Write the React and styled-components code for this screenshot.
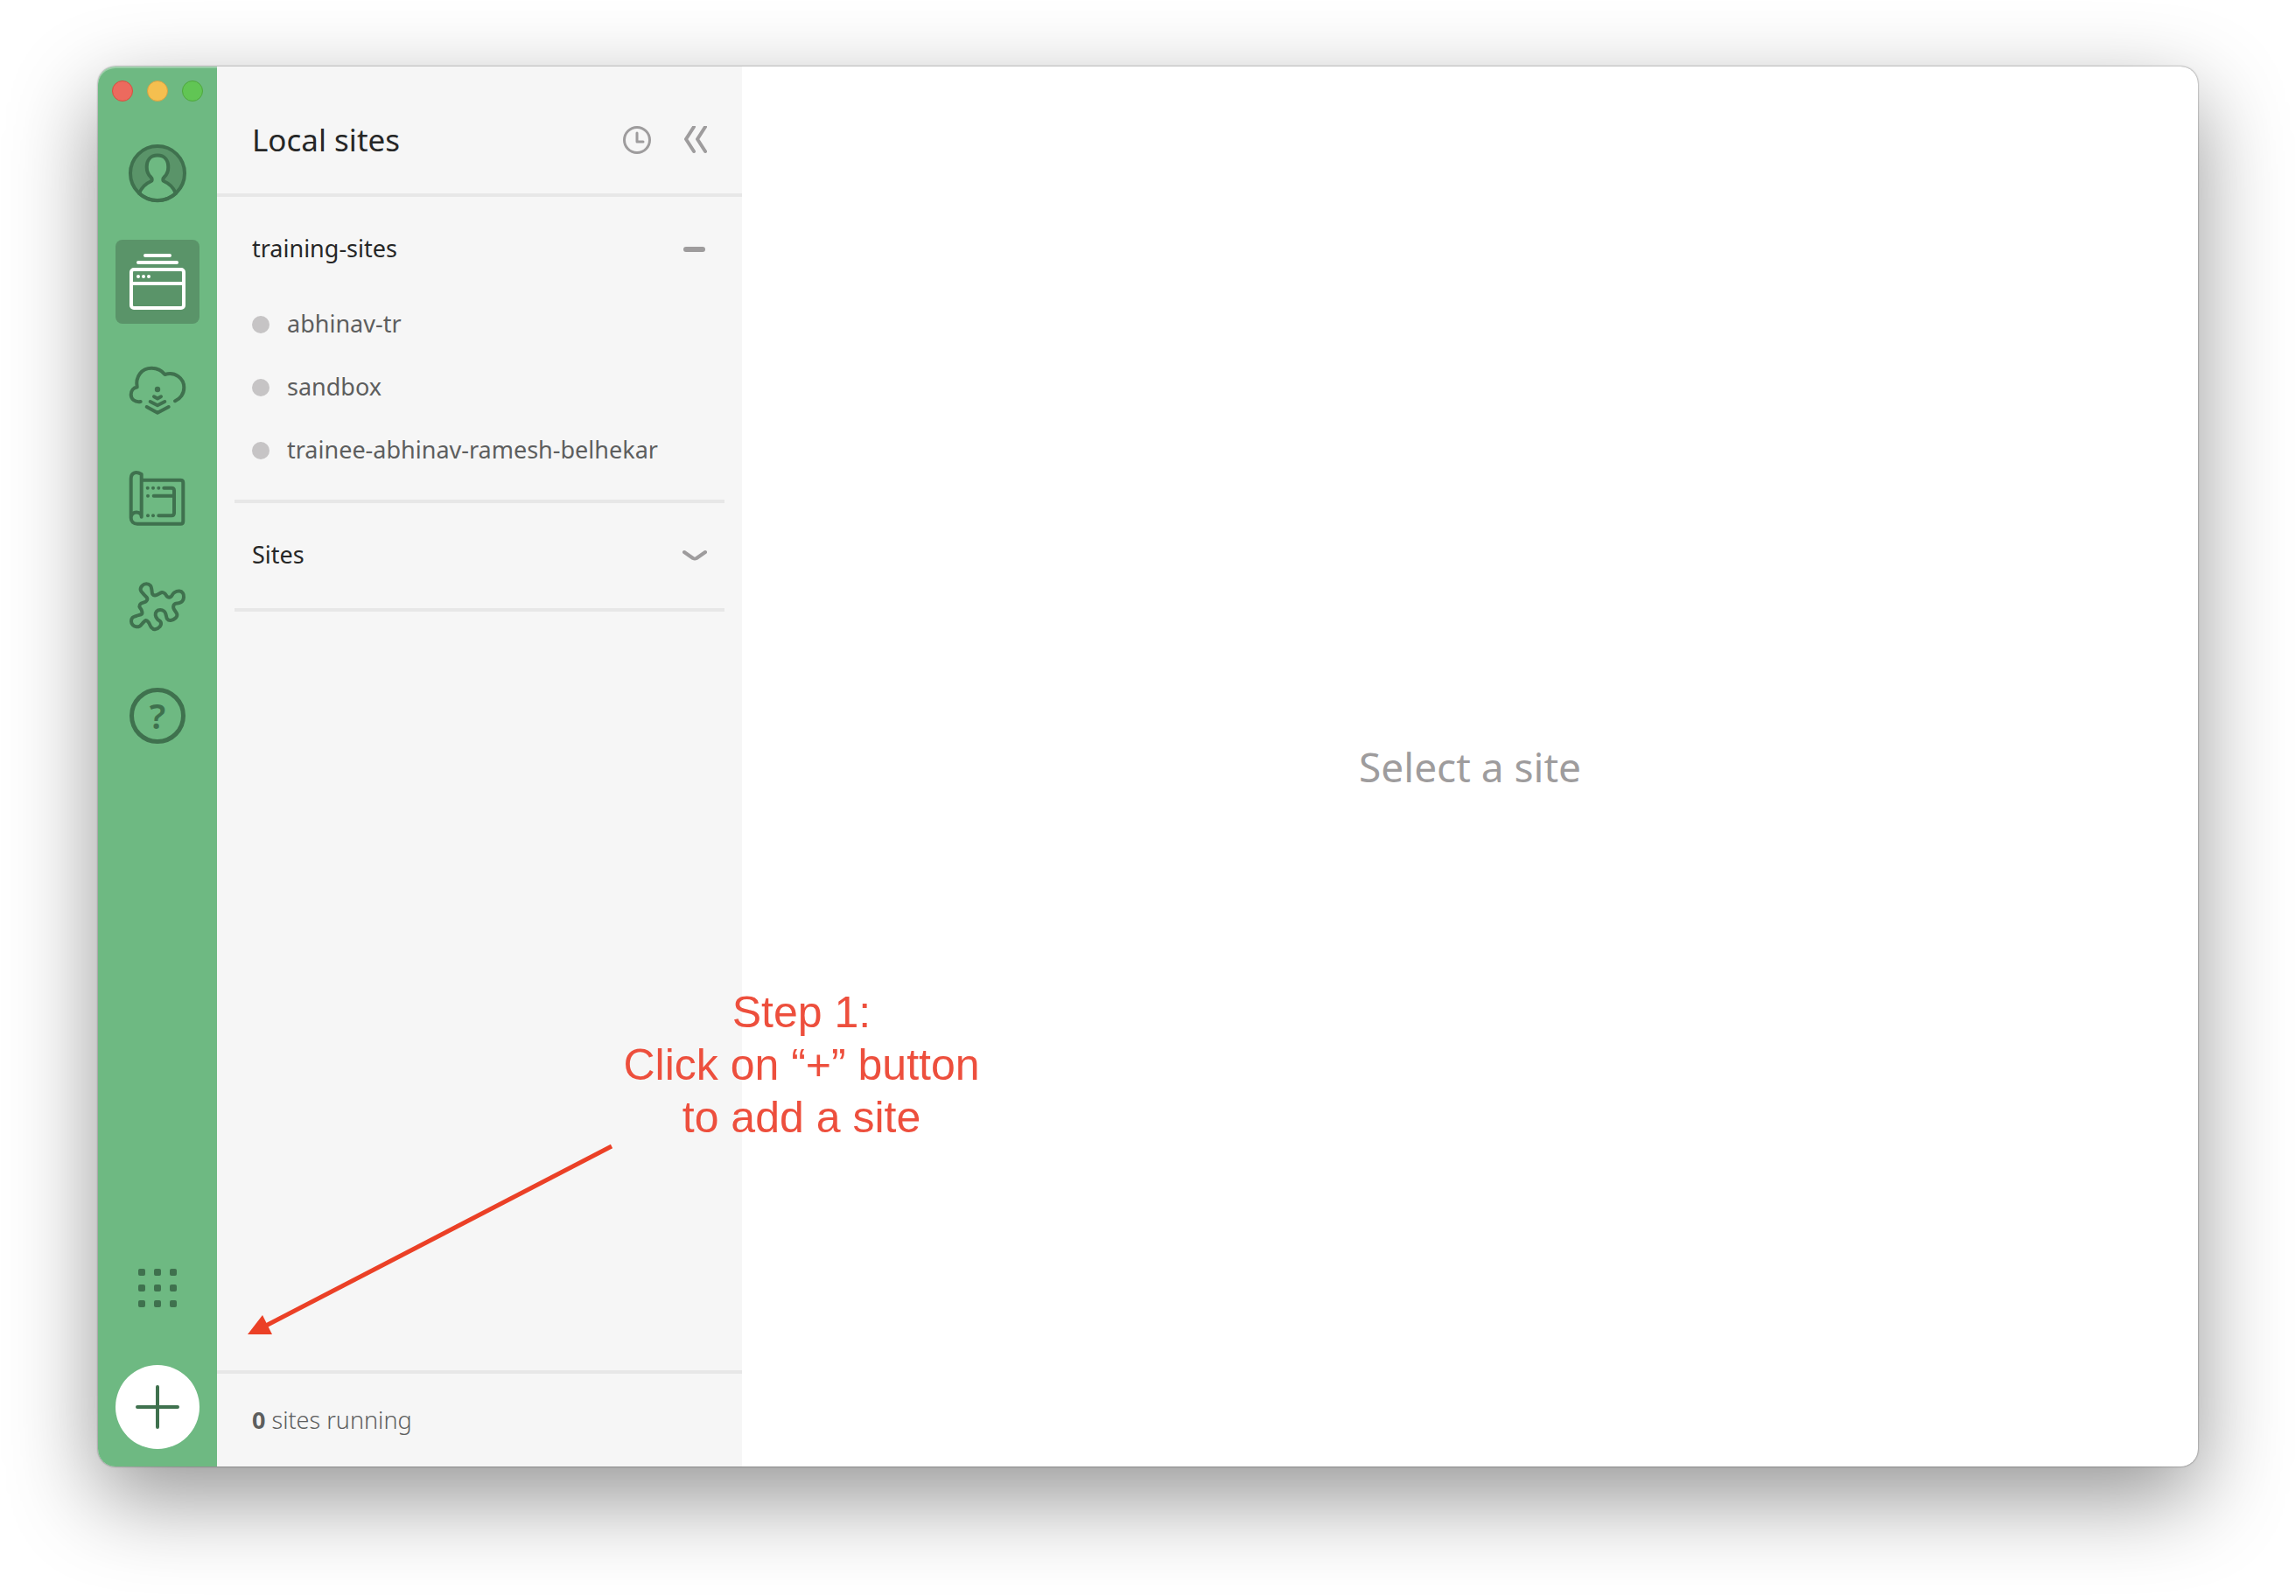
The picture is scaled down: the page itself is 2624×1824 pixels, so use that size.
import React, { useState } from "react";
import styled, { createGlobalStyle } from "styled-components";

const color = {
  rail: "#6eb982",
  railActive: "#5a9469",
  railInk: "#3f714e",
  panel: "#f6f6f6",
  line: "#e7e7e7",
  heading: "#262727",
  body: "#5d5e5e",
  muted: "#9e9c9d",
  dot: "#c6c4c5",
  note: "#ed4f3d",
  arrow: "#eb4026",
};

const GlobalStyle = createGlobalStyle`
  *, *::before, *::after { box-sizing: border-box; }
  body {
    margin: 0;
    background: #fff;
    font-family: "Noto Sans", "Open Sans", sans-serif;
    color: ${color.body};
  }
  button { font: inherit; color: inherit; }
`;

const Desktop = styled.div`
  display: flex;
  min-height: 100vh;
  padding: 76px 112px 148px;
  overflow: hidden;
`;

const Window = styled.div`
  position: relative;
  display: flex;
  flex: 1;
  border-radius: 20px;
  background: #fff;
  box-shadow: 0 0 2px rgba(0, 0, 0, 0.6), 0 36px 100px rgba(0, 0, 0, 0.42);
`;

const Rail = styled.nav`
  display: flex;
  flex-direction: column;
  align-items: center;
  width: 136px;
  padding: 16px 20px 20px;
  border-radius: 20px 0 0 20px;
  background: ${color.rail};
  color: ${color.railInk};
  box-shadow: inset 0 2px 0 rgba(255, 255, 255, 0.3);
`;

const TrafficLights = styled.div`
  display: flex;
  gap: 16px;
  margin-bottom: 34px;
`;

const Light = styled.button`
  width: 24px;
  height: 24px;
  padding: 0;
  border: 1px solid ${(p) => p.$edge};
  border-radius: 50%;
  background: ${(p) => p.$fill};
`;

const RailItems = styled.div`
  display: flex;
  flex: 1;
  flex-direction: column;
  gap: 28px;
`;

const RailButton = styled.button`
  display: grid;
  place-items: center;
  width: 96px;
  height: 96px;
  padding: 0;
  border: 0;
  border-radius: 8px;
  background: ${(p) => (p.$active ? color.railActive : "transparent")};
  color: ${(p) => (p.$active ? "#fff" : "inherit")};
`;

const HelpMark = styled.span`
  display: grid;
  place-items: center;
  width: 64px;
  height: 64px;
  border: 5px solid currentColor;
  border-radius: 50%;
  font-size: 40px;
  font-weight: 600;
  line-height: 54px;
`;

const AddButton = styled.button`
  display: grid;
  place-items: center;
  width: 96px;
  height: 96px;
  margin-top: 40px;
  padding: 0;
  border: 0;
  border-radius: 50%;
  background: #fff;
`;

const Sidebar = styled.aside`
  display: flex;
  flex-direction: column;
  width: 600px;
  background: ${color.panel};
`;

const SidebarHeader = styled.header`
  display: flex;
  align-items: center;
  gap: 32px;
  padding: 64px 40px 41px;
  border-bottom: 4px solid ${color.line};
`;

const Title = styled.h1`
  flex: 1;
  margin: 0;
  font-size: 35px;
  font-weight: 400;
  line-height: 40px;
  color: ${color.heading};
`;

const IconButton = styled.button`
  display: flex;
  padding: 0;
  border: 0;
  background: none;
  color: ${color.muted};
`;

const Groups = styled.div`
  flex: 1;
  padding: 0 20px;
`;

const Group = styled.section`
  padding-bottom: ${(p) => (p.$open ? 20 : 0)}px;
  border-bottom: 4px solid ${color.line};
`;

const GroupToggle = styled.button`
  display: flex;
  align-items: center;
  justify-content: space-between;
  width: 100%;
  padding: 40px 20px ${(p) => (p.$open ? 30 : 40)}px;
  border: 0;
  background: none;
  font-size: 27px;
  line-height: 40px;
  color: ${color.heading};

  svg { color: ${color.muted}; }
`;

const SiteList = styled.ul`
  margin: 0;
  padding: 0;
  list-style: none;
`;

const SiteLink = styled.a`
  display: flex;
  align-items: center;
  gap: 20px;
  height: 72px;
  padding: 0 20px;
  font-size: 27px;
  line-height: 40px;
  color: ${color.body};
  text-decoration: none;
`;

const Label = styled.span`
  padding-bottom: 2px;
  line-height: 38px;
`;

const StatusDot = styled.span`
  width: 20px;
  height: 20px;
  border-radius: 50%;
  background: ${color.dot};
`;

const SidebarFooter = styled.footer`
  padding: 33px 40px;
  border-top: 4px solid ${color.line};
  font-size: 27px;
  font-weight: 300;
  line-height: 40px;

  strong { font-weight: 700; }
`;

const Main = styled.main`
  display: grid;
  flex: 1;
  place-items: center;
  border-radius: 0 20px 20px 0;
`;

const EmptyMessage = styled.p`
  margin: 0;
  font-size: 46px;
  line-height: 60px;
  color: ${color.muted};
`;

/* Tutorial overlay, anchored to the corner that holds the add button. */
const Note = styled.p`
  position: absolute;
  bottom: 369px;
  left: 594px;
  width: 420px;
  margin: 0;
  font-family: "Liberation Sans", Arial, sans-serif;
  font-size: 50px;
  line-height: 60px;
  text-align: center;
  white-space: nowrap;
  color: ${color.note};
`;

const Arrow = styled.svg`
  position: absolute;
  bottom: 146px;
  left: 164px;
  pointer-events: none;
`;

function smoothPath(points) {
  const n = points.length;
  const at = (i) => points[(i + n) % n];
  let d = `M${points[0].join(" ")}`;
  for (let i = 0; i < n; i++) {
    const [a, b, c, e] = [at(i - 1), at(i), at(i + 1), at(i + 2)];
    const p1 = [b[0] + (c[0] - a[0]) / 6, b[1] + (c[1] - a[1]) / 6];
    const p2 = [c[0] - (e[0] - b[0]) / 6, c[1] - (e[1] - b[1]) / 6];
    d += ` C${p1.join(" ")} ${p2.join(" ")} ${c.join(" ")}`;
  }
  return `${d}Z`;
}

const puzzleOutline = smoothPath([
  [28.7, 28.3], [30.5, 23.3], [35.3, 21.3], [40, 23.3], [41.4, 28], [42.3, 33], [46, 34.3],
  [53, 31], [56.5, 32.5], [59.7, 36.3], [63.5, 35.8], [67, 31.3], [73, 29.5],
  [77, 31.8], [78, 36.5], [76.4, 41], [72.5, 43.2], [67.5, 44.4], [66.3, 49], [70.3, 56],
  [68.7, 60.2], [63, 63], [59, 61.2], [57.3, 55.5], [55.5, 52.5], [51.3, 51], [47, 52.6],
  [45.7, 57], [47.8, 61.5], [51.7, 65], [50.8, 70], [45, 73.2], [41, 71.2],
  [37.8, 65.3], [34.7, 63], [31, 66.3], [28, 69.4], [23.6, 70.3], [19.6, 68.2], [18, 64],
  [19.4, 59.8], [24, 57.8], [30, 55.8], [30, 52], [27.3, 47], [29.2, 43.6],
  [34.7, 41.5], [36.2, 37.6], [32.5, 33.5],
]);

const Icon = ({ size = 96, width = 4, children }) => (
  <svg
    width={size}
    height={size}
    viewBox={`0 0 ${size} ${size}`}
    fill="none"
    stroke="currentColor"
    strokeWidth={width}
    strokeLinecap="round"
    strokeLinejoin="round"
    aria-hidden="true"
  >
    {children}
  </svg>
);

const Dots = ({ points, r = 2 }) => (
  <g fill="currentColor" stroke="none">
    {points.map(([x, y]) => (
      <circle key={`${x}-${y}`} cx={x} cy={y} r={r} />
    ))}
  </g>
);

const UserIcon = () => (
  <Icon>
    <circle cx="48" cy="48" r="31" fill={color.railActive} stroke="none" />
    <path
      d="M27 71C30 64 34 60 40 57.5C42.5 56.5 42 54 40 52C37 49 35.7 46 35.7 41C35.7 33 40 27.5 48 27.5C56 27.5 60.3 33 60.3 41C60.3 46 59 49 56 52C54 54 53.5 56.5 56 57.5C62 60 66 64 69 71A31 31 0 0 1 27 71Z"
      fill={color.rail}
    />
    <circle cx="48" cy="48" r="31" />
  </Icon>
);

const SitesIcon = () => (
  <Icon>
    <path d="M34 18H62M26 26H70M18 50H78" />
    <rect x="18" y="34" width="60" height="44" rx="3" />
    <Dots points={[[26, 42], [32, 42], [38, 42]]} />
  </Icon>
);

const CloudIcon = () => (
  <Icon>
    <path d="M28.7 61C22 62 17.7 58 17.7 53C17.7 48.5 20.5 45 24.7 44.5C22.5 32 30 22.7 41.3 22.7C48 22.7 53 25.5 56.5 30C68 26.5 78.3 34 78.3 45C78.3 52 74 58 68 60.3" />
    <path d="M44 55.3L48 57.5L52 55.3M39.7 61L48 65.3L56.3 61M35.7 67L48 73.7L60.7 67" />
    <Dots points={[[48, 47]]} r={3.2} />
  </Icon>
);

const BlueprintIcon = () => (
  <Icon>
    <path d="M29.7 68V20C23 16 17.7 18.5 17.7 25V69.7C17.7 74 20.5 76.7 25 76.7H74.3Q77.3 76.7 77.3 73.7V29.7Q77.3 26.7 74.3 26.7H31M17.7 69.7C18 61.5 29.7 61.5 29.7 68.7" />
    <path d="M55.3 35.7H64Q67 35.7 67 38.7V64.3Q67 67.3 64 67.3H49.3M43.7 44.7H66" />
    <Dots points={[[36.7, 35.7], [43, 35.7], [49.3, 35.7], [37, 44.7], [37, 67.3], [43, 67.3]]} />
  </Icon>
);

const PuzzleIcon = () => (
  <Icon>
    <path d={puzzleOutline} />
  </Icon>
);

const AppsIcon = () => (
  <Icon size={44}>
    <g fill="currentColor" stroke="none">
      {[0, 18, 36].flatMap((y) =>
        [0, 18, 36].map((x) => <rect key={`${x}-${y}`} x={x} y={y} width="8" height="8" rx="2" />)
      )}
    </g>
  </Icon>
);

const PlusIcon = () => (
  <Icon size={52}>
    <path d="M26 3V49M3 26H49" />
  </Icon>
);

const ClockIcon = () => (
  <Icon size={32} width={3}>
    <circle cx="16" cy="16" r="14.5" />
    <path d="M16 8V18H23" />
  </Icon>
);

const CollapseIcon = () => (
  <Icon size={32} width={4}>
    <path d="M17 1L8 15L17 29M30 1L21 15L30 29" />
  </Icon>
);

const MinusIcon = () => (
  <Icon size={28} width={6}>
    <path d="M4 14H23" />
  </Icon>
);

const ChevronIcon = () => (
  <Icon size={28} width={4}>
    <path d="M2 10L12 17Q14 18 16 17L26 10" />
  </Icon>
);

const railItems = [
  { id: "account", label: "Account", icon: <UserIcon /> },
  { id: "sites", label: "Local sites", icon: <SitesIcon /> },
  { id: "connect", label: "Connect", icon: <CloudIcon /> },
  { id: "blueprints", label: "Blueprints", icon: <BlueprintIcon /> },
  { id: "addons", label: "Add-ons", icon: <PuzzleIcon /> },
  { id: "help", label: "Help", icon: <HelpMark>?</HelpMark> },
];

const groups = [
  {
    name: "training-sites",
    sites: ["abhinav-tr", "sandbox", "trainee-abhinav-ramesh-belhekar"],
    initiallyOpen: true,
  },
  { name: "Sites", sites: [], initiallyOpen: false },
];

function SiteGroup({ name, sites, initiallyOpen }) {
  const [open, setOpen] = useState(initiallyOpen);
  return (
    <Group $open={open}>
      <GroupToggle $open={open} aria-expanded={open} onClick={() => setOpen(!open)}>
        <Label>{name}</Label>
        {open ? <MinusIcon /> : <ChevronIcon />}
      </GroupToggle>
      {open && (
        <SiteList>
          {sites.map((site) => (
            <li key={site}>
              <SiteLink href={`#${site}`}>
                <StatusDot />
                <Label>{site}</Label>
              </SiteLink>
            </li>
          ))}
        </SiteList>
      )}
    </Group>
  );
}

export default function App() {
  const [active, setActive] = useState("sites");
  return (
    <>
      <GlobalStyle />
      <Desktop>
        <Window>
          <Rail>
            <TrafficLights>
              <Light aria-label="Close" $fill="#ec6a5e" $edge="#d5503f" />
              <Light aria-label="Minimize" $fill="#f5bf4f" $edge="#d6a243" />
              <Light aria-label="Zoom" $fill="#61c554" $edge="#4fa73e" />
            </TrafficLights>
            <RailItems>
              {railItems.map(({ id, label, icon }) => (
                <RailButton
                  key={id}
                  aria-label={label}
                  $active={id === active}
                  onClick={() => setActive(id)}
                >
                  {icon}
                </RailButton>
              ))}
            </RailItems>
            <RailButton aria-label="More apps">
              <AppsIcon />
            </RailButton>
            <AddButton aria-label="Add site">
              <PlusIcon />
            </AddButton>
          </Rail>

          <Sidebar>
            <SidebarHeader>
              <Title>Local sites</Title>
              <IconButton aria-label="Recent">
                <ClockIcon />
              </IconButton>
              <IconButton aria-label="Collapse sidebar">
                <CollapseIcon />
              </IconButton>
            </SidebarHeader>
            <Groups>
              {groups.map((group) => (
                <SiteGroup key={group.name} {...group} />
              ))}
            </Groups>
            <SidebarFooter>
              <strong>0</strong> sites running
            </SidebarFooter>
          </Sidebar>

          <Main>
            <EmptyMessage>Select a site</EmptyMessage>
          </Main>

          <Note>
            Step 1:
            <br />
            Click on “+” button
            <br />
            to add a site
          </Note>
          <Arrow width="434" height="230" viewBox="0 0 434 230" aria-hidden="true">
            <path d="M423 10L26 216" stroke={color.arrow} strokeWidth="5" />
            <path d="M7 225L24 203L35 225Z" fill={color.arrow} />
          </Arrow>
        </Window>
      </Desktop>
    </>
  );
}
